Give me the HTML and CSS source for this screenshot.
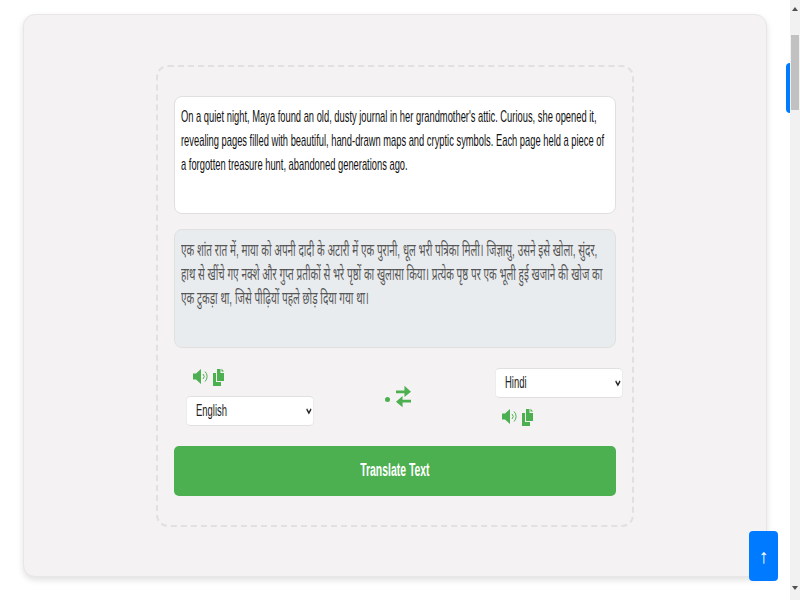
FILE: index.html
```html
<!DOCTYPE html>
<html lang="en">
<head>
  <meta charset="UTF-8">
  <meta name="viewport" content="width=device-width, initial-scale=1.0">
  <title>Translator</title>
  <link rel="stylesheet" href="styles.css">
</head>
<body>
  <div class="page">
    <div class="card">
      <div class="wrapper">
        <div class="text-box from-text">
          <textarea class="text-input">On a quiet night, Maya found an old, dusty journal in her grandmother's attic. Curious, she opened it, revealing pages filled with beautiful, hand-drawn maps and cryptic symbols. Each page held a piece of a forgotten treasure hunt, abandoned generations ago.</textarea>
        </div>
        <div class="text-box to-text">
          <textarea class="text-input" readonly>एक शांत रात में, माया को अपनी दादी के अटारी में एक पुरानी, धूल भरी पत्रिका मिली। जिज्ञासु, उसने इसे खोला, सुंदर, हाथ से खींचे गए नक्शे और गुप्त प्रतीकों से भरे पृष्ठों का खुलासा किया। प्रत्येक पृष्ठ पर एक भूली हुई खजाने की खोज का एक टुकड़ा था, जिसे पीढ़ियों पहले छोड़ दिया गया था।</textarea>
        </div>
        <ul class="controls">
          <li class="lang">
            <div class="icons">
              <svg class="icon-sound" viewBox="0 0 15 17"><path d="M0 5.500h3L8 1v15l-5-4.500H0z"/><path class="wave" d="M10 6a3.500 3.500 0 0 1 0 5M12 3.500a7 7 0 0 1 0 10"/></svg>
              <svg class="icon-copy" viewBox="0 0 11 18"><path d="M0 5h3v9h5v4H0zM4 1h3.500v4H11v8H4zM8.500 0.500L11 3.500H8.500z"/></svg>
            </div>
            <div class="select-wrap">
              <select class="lang-select"><option>English</option><option>Hindi</option></select>
            </div>
          </li>
          <li class="swap">
            <svg class="swap-icon" viewBox="0 0 16 23"><path d="M0 5h9V0l7 6.500L9 12V8H0zM16 15H7v-4l-7 6 7 6v-5h9z"/></svg>
          </li>
          <li class="lang">
            <div class="select-wrap">
              <select class="lang-select"><option>Hindi</option><option>English</option></select>
            </div>
            <div class="icons">
              <svg class="icon-sound" viewBox="0 0 15 17"><path d="M0 5.500h3L8 1v15l-5-4.500H0z"/><path class="wave" d="M10 6a3.500 3.500 0 0 1 0 5M12 3.500a7 7 0 0 1 0 10"/></svg>
              <svg class="icon-copy" viewBox="0 0 11 18"><path d="M0 5h3v9h5v4H0zM4 1h3.500v4H11v8H4zM8.500 0.500L11 3.500H8.500z"/></svg>
            </div>
          </li>
        </ul>
        <button class="translate-btn"><span class="btn-label">Translate Text</span></button>
      </div>
    </div>
    <div class="scrollbar">
      <span class="arrow-up"></span>
      <div class="thumb"></div>
      <span class="arrow-down"></span>
    </div>
  </div>
  <div class="side-tab"></div>
  <button class="to-top">↑</button>
</body>
</html>
```

FILE: styles.css
```css
body {
  margin: 0;
  font-family: "Liberation Sans", Arial, "Noto Sans", sans-serif;
  background-color: #fff;
  overflow: hidden;
}
.page {
  display: flex;
  height: 600px;
}
.card {
  width: 744px;
  height: 563px;
  margin: 14px 0 0 23px;
  padding-top: 50px;
  box-sizing: border-box;
  border: 1px solid #e8e6e7;
  border-radius: 12px;
  background-color: #f4f2f3;
  box-shadow: 0 3px 6px rgba(0, 0, 0, 0.12);
}
.wrapper {
  width: 478px;
  height: 462px;
  margin-left: 132px;
  padding: 29px 16px 0;
  box-sizing: border-box;
  border: 2px dashed #e2e0e1;
  border-radius: 12px;
}
.text-box {
  width: 442px;
  padding: 8px 6px;
  margin-bottom: 15px;
  box-sizing: border-box;
  border: 1px solid #e0e0e0;
  border-radius: 8px;
  overflow: hidden;
}
/* the screenshot has narrowed glyphs, so text is squeezed on x only */
.text-input {
  display: block;
  height: 100%;
  padding: 0;
  border: none;
  outline: none;
  resize: none;
  overflow: hidden;
  background: transparent;
  color: inherit;
  font-family: inherit;
  line-height: 24px;
  transform-origin: left top;
}
.from-text {
  height: 118px;
  background-color: #fff;
  color: #111;
}
.from-text .text-input {
  width: 776px;
  font-size: 17px;
  transform: scaleX(0.55);
}
.to-text {
  height: 119px;
  background-color: #e9ecef;
  color: #555;
}
.to-text .text-input {
  width: 776px;
  font-size: 18px;
  transform: scaleX(0.555);
}
.controls {
  display: flex;
  align-items: center;
  justify-content: space-between;
  width: 437px;
  margin: 20px 0 20px 12px;
  padding: 0;
  list-style: none;
}
.lang {
  display: flex;
  flex-direction: column;
  gap: 10px;
  width: 128px;
}
.icons {
  display: flex;
  gap: 5px;
  height: 18px;
  padding-left: 7px;
}
.icon-sound {
  width: 15px;
  height: 17px;
  fill: #4caf50;
}
.icon-copy {
  width: 11px;
  height: 18px;
  fill: #4caf50;
}
.wave {
  fill: none;
  stroke: #4caf50;
  stroke-width: 1;
}
.select-wrap {
  width: 128px;
  height: 30px;
}
.lang-select {
  width: 230px;
  height: 30px;
  padding: 0 13px 2px;
  border: 1px solid #e0e0e0;
  border-radius: 8px / 5px;
  background-color: #fff;
  font-family: inherit;
  font-size: 17px;
  color: #222;
  transform: scaleX(0.556);
  transform-origin: left top;
}
.swap {
  display: flex;
  align-items: center;
  margin: -2px 13px 0 0;
}
.swap::before {
  content: "";
  width: 5px;
  height: 5px;
  margin: 6px 6px 0 0;
  border-radius: 50%;
  background-color: #4caf50;
}
.swap-icon {
  width: 15px;
  height: 23px;
  fill: #4caf50;
}
.translate-btn {
  display: block;
  width: 442px;
  height: 50px;
  padding: 0 0 2px;
  border: none;
  border-radius: 5px;
  background-color: #4caf50;
  color: #fff;
  font-family: inherit;
  font-size: 18px;
  font-weight: bold;
}
.btn-label {
  display: inline-block;
  transform: scaleX(0.58);
}
.scrollbar {
  display: flex;
  flex-direction: column;
  align-items: center;
  width: 10px;
  height: 600px;
  margin-left: 23px;
  background-color: #f1f1f1;
}
.arrow-up, .arrow-down {
  width: 0;
  height: 0;
  border-left: 3px solid transparent;
  border-right: 3px solid transparent;
}
.arrow-up {
  margin: 7px 0 24px;
  border-bottom: 4px solid #505050;
}
.arrow-down {
  margin-top: 476px;
  border-top: 4px solid #505050;
}
.thumb {
  width: 8px;
  height: 75px;
  background-color: #c1c1c1;
}
.side-tab {
  position: fixed;
  top: 63px;
  left: 786px;
  width: 4px;
  height: 50px;
  border-radius: 5px 0 0 5px;
  background-color: #007bff;
}
.to-top {
  position: fixed;
  top: 531px;
  left: 749px;
  width: 29px;
  height: 50px;
  padding: 0;
  border: none;
  border-radius: 4px;
  background-color: #007bff;
  color: #fff;
  font-family: inherit;
  font-size: 20px;
}
```
